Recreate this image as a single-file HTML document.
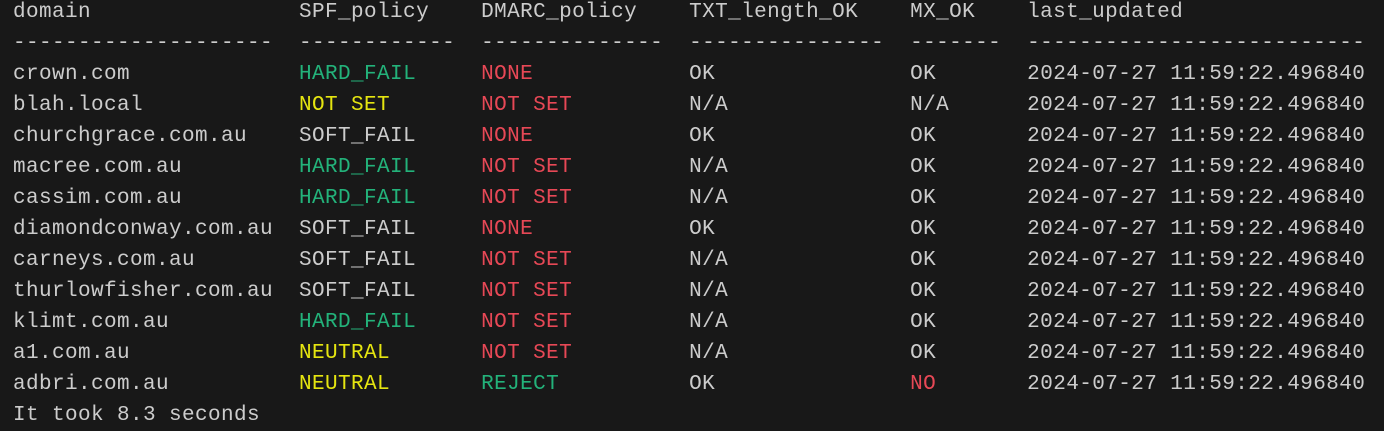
<!DOCTYPE html>
<html><head><meta charset="utf-8"><style>
html,body{margin:0;padding:0;background:#181818;width:1384px;height:429px;overflow:hidden}
pre{margin:0;position:absolute;left:13px;top:-3px;font-family:"Liberation Mono",monospace;font-size:21px;letter-spacing:0.4px;line-height:31px;color:#cccccc}
.g{color:#23b27a}.r{color:#e74856}.y{color:#e5e510}
</style></head><body><pre>domain                SPF_policy    DMARC_policy    TXT_length_OK    MX_OK    last_updated
--------------------  ------------  --------------  ---------------  -------  --------------------------
crown.com             <span class="g">HARD_FAIL</span>     <span class="r">NONE</span>            OK               OK       2024-07-27 11:59:22.496840
blah.local            <span class="y">NOT SET</span>       <span class="r">NOT SET</span>         N/A              N/A      2024-07-27 11:59:22.496840
churchgrace.com.au    SOFT_FAIL     <span class="r">NONE</span>            OK               OK       2024-07-27 11:59:22.496840
macree.com.au         <span class="g">HARD_FAIL</span>     <span class="r">NOT SET</span>         N/A              OK       2024-07-27 11:59:22.496840
cassim.com.au         <span class="g">HARD_FAIL</span>     <span class="r">NOT SET</span>         N/A              OK       2024-07-27 11:59:22.496840
diamondconway.com.au  SOFT_FAIL     <span class="r">NONE</span>            OK               OK       2024-07-27 11:59:22.496840
carneys.com.au        SOFT_FAIL     <span class="r">NOT SET</span>         N/A              OK       2024-07-27 11:59:22.496840
thurlowfisher.com.au  SOFT_FAIL     <span class="r">NOT SET</span>         N/A              OK       2024-07-27 11:59:22.496840
klimt.com.au          <span class="g">HARD_FAIL</span>     <span class="r">NOT SET</span>         N/A              OK       2024-07-27 11:59:22.496840
a1.com.au             <span class="y">NEUTRAL</span>       <span class="r">NOT SET</span>         N/A              OK       2024-07-27 11:59:22.496840
adbri.com.au          <span class="y">NEUTRAL</span>       <span class="g">REJECT</span>          OK               <span class="r">NO</span>       2024-07-27 11:59:22.496840
It took 8.3 seconds</pre></body></html>
